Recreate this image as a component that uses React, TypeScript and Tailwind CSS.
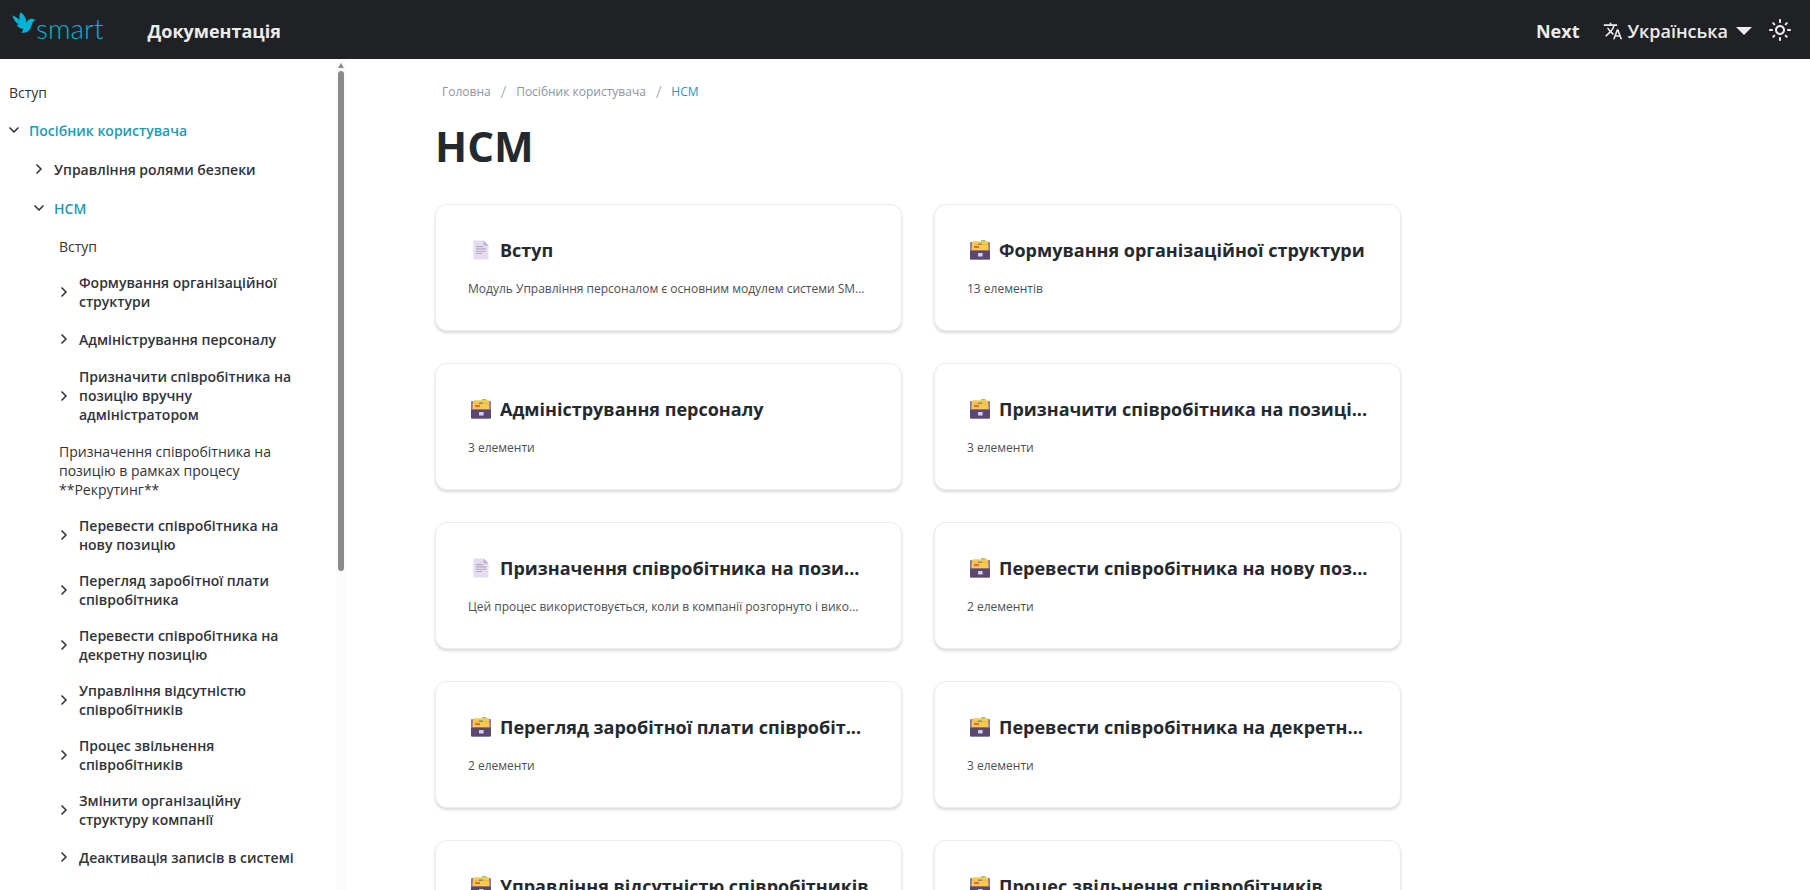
import { useState } from 'react'
import { ChevronDown, ChevronRight } from 'lucide-react'
import { MdTranslate } from 'react-icons/md'

type Level = 0 | 1 | 2

interface NavItem {
  label: string
  level: Level
  category?: boolean
  open?: boolean
}

interface Card {
  title: string
  text: string
  icon: 'page' | 'box'
}

const navItems: NavItem[] = [
  { label: 'Вступ', level: 0 },
  { label: 'Посібник користувача', level: 0, category: true, open: true },
  { label: 'Управління ролями безпеки', level: 1, category: true },
  { label: 'HCM', level: 1, category: true, open: true },
  { label: 'Вступ', level: 2 },
  { label: 'Формування організаційної структури', level: 2, category: true },
  { label: 'Адміністрування персоналу', level: 2, category: true },
  { label: 'Призначити співробітника на позицію вручну адміністратором', level: 2, category: true },
  { label: 'Призначення співробітника на позицію в рамках процесу **Рекрутинг**', level: 2 },
  { label: 'Перевести співробітника на нову позицію', level: 2, category: true },
  { label: 'Перегляд заробітної плати співробітника', level: 2, category: true },
  { label: 'Перевести співробітника на декретну позицію', level: 2, category: true },
  { label: 'Управління відсутністю співробітників', level: 2, category: true },
  { label: 'Процес звільнення співробітників', level: 2, category: true },
  { label: 'Змінити організаційну структуру компанії', level: 2, category: true },
  { label: 'Деактивація записів в системі', level: 2, category: true },
]

const cards: Card[] = [
  { title: 'Вступ', text: 'Модуль Управління персоналом є основним модулем системи SM...', icon: 'page' },
  { title: 'Формування організаційної структури', text: '13 елементів', icon: 'box' },
  { title: 'Адміністрування персоналу', text: '3 елементи', icon: 'box' },
  { title: 'Призначити співробітника на позиці...', text: '3 елементи', icon: 'box' },
  { title: 'Призначення співробітника на пози...', text: 'Цей процес використовується, коли в компанії розгорнуто і вико...', icon: 'page' },
  { title: 'Перевести співробітника на нову поз...', text: '2 елементи', icon: 'box' },
  { title: 'Перегляд заробітної плати співробіт...', text: '2 елементи', icon: 'box' },
  { title: 'Перевести співробітника на декретн...', text: '3 елементи', icon: 'box' },
  { title: 'Управління відсутністю співробітників', text: '2 елементи', icon: 'box' },
  { title: 'Процес звільнення співробітників', text: '2 елементи', icon: 'box' },
]

const indent: Record<Level, string> = {
  0: 'pl-[9px]',
  1: 'pl-[34px]',
  2: 'pl-[59px]',
}

function BirdIcon() {
  return (
    <svg viewBox="0 0 24 24" className="h-6 w-6 shrink-0 fill-[#00b4d8]" aria-hidden="true">
      <path d="M0.5 3.2 C3 4.6 5.5 5.8 7.8 8 C7 5 7.2 2.6 8.6 0.2 C10.8 1.8 13.2 4.2 14 7.8 L14.4 11 C15.2 8.6 17 7 19.2 6.8 C20.6 6.7 21.4 7.2 22 7.6 L24 8.1 L21.7 8.9 C20.4 10 20 12 19.2 14.4 C17.8 18.8 14.4 21.2 9.2 20.8 C10.6 19.4 11.2 18.2 11.2 16.8 C8 16.6 5.6 15.2 4.6 12.8 C5.4 12.8 6 12.6 6.6 12.2 C3.6 10.6 1.2 7.6 0.5 3.2 Z" />
    </svg>
  )
}

function SunIcon() {
  return (
    <svg viewBox="0 0 24 24" className="h-6 w-6" aria-hidden="true">
      <path
        fill="currentColor"
        d="M12,9c1.65,0,3,1.35,3,3s-1.35,3-3,3s-3-1.35-3-3S10.35,9,12,9 M12,7c-2.76,0-5,2.24-5,5s2.24,5,5,5s5-2.24,5-5 S14.76,7,12,7L12,7z M2,13l2,0c0.55,0,1-0.45,1-1s-0.45-1-1-1l-2,0c-0.55,0-1,0.45-1,1S1.45,13,2,13z M20,13l2,0c0.55,0,1-0.45,1-1 s-0.45-1-1-1l-2,0c-0.55,0-1,0.45-1,1S19.45,13,20,13z M11,2v2c0,0.55,0.45,1,1,1s1-0.45,1-1V2c0-0.55-0.45-1-1-1S11,1.45,11,2z M11,20v2c0,0.55,0.45,1,1,1s1-0.45,1-1v-2c0-0.55-0.45-1-1-1C11.45,19,11,19.45,11,20z M5.99,4.58c-0.39-0.39-1.03-0.39-1.41,0 c-0.39,0.39-0.39,1.03,0,1.41l1.06,1.06c0.39,0.39,1.03,0.39,1.41,0s0.39-1.03,0-1.41L5.99,4.58z M18.36,16.95 c-0.39-0.39-1.03-0.39-1.41,0c-0.39,0.39-0.39,1.03,0,1.41l1.06,1.06c0.39,0.39,1.03,0.39,1.41,0c0.39-0.39,0.39-1.03,0-1.41 L18.36,16.95z M19.42,5.99c0.39-0.39,0.39-1.03,0-1.41c-0.39-0.39-1.03-0.39-1.41,0l-1.06,1.06c-0.39,0.39-0.39,1.03,0,1.41 s1.03,0.39,1.41,0L19.42,5.99z M7.05,18.36c0.39-0.39,0.39-1.03,0-1.41c-0.39-0.39-1.03-0.39-1.41,0l-1.06,1.06 c-0.39,0.39-0.39,1.03,0,1.41s1.03,0.39,1.41,0L7.05,18.36z"
      />
    </svg>
  )
}

function PageIcon() {
  return (
    <svg viewBox="-1 0 24 24" className="h-6 w-6 shrink-0" aria-hidden="true">
      <path d="M4.5 2.5 H14.5 L19.5 7.5 V21.5 H4.5 Z" fill="#e6dcef" />
      <path d="M14.5 2.5 L19.5 7.5 H14.5 Z" fill="#bcb0cd" />
      <path d="M7 8.6 H14 M7 10.9 H17 M7 13.2 H17 M7 15.5 H13" stroke="#b5aac3" strokeWidth="1.1" />
    </svg>
  )
}

function BoxIcon() {
  return (
    <svg viewBox="-1 0 24 24" className="h-6 w-6 shrink-0" aria-hidden="true">
      <rect x="2" y="4" width="20" height="17.5" rx="1" fill="#8d7a9c" />
      <path d="M13 2 H17.5 V4 H13 Z" fill="#86c98a" />
      <path d="M4 4.4 L5 3.2 H20 L20.5 12.5 H3.5 Z" fill="#fcc94f" />
      <path d="M5 6.6 H20" stroke="#f4b23c" strokeWidth="0.8" />
      <path d="M10 5.4 H14 V7 H10 Z" fill="#7c9a6b" />
      <path d="M6 8 H11 V10 H6 Z" fill="#f0653f" />
      <rect x="2" y="12.5" width="20" height="9" rx="1" fill="#5b4870" />
      <rect x="10" y="15" width="4.6" height="3.6" rx="0.5" fill="#d9ccf0" />
    </svg>
  )
}

function Header() {
  return (
    <header className="flex h-[59px] shrink-0 items-center justify-between bg-[#202125] pr-[18px] pl-3 text-[#ececec]">
      <div className="flex items-center gap-11">
        <a href="/" className="flex items-start pb-1 text-[#00b4d8]">
          <BirdIcon />
          <span className="font-['Lato',sans-serif] text-[28px] leading-8 font-light">smart</span>
        </a>
        <a href="/docs" className="pt-[2px] text-lg font-bold">Документація</a>
      </div>

      <nav className="flex items-center gap-6">
        <a href="/next" className="pt-[2px] text-lg font-bold">Next</a>
        <button type="button" className="flex items-center gap-1 pt-[2px] text-lg font-semibold">
          <MdTranslate className="size-5" />
          Українська
          <svg viewBox="0 0 16 8" className="ml-1 h-2 w-4" aria-hidden="true">
            <path d="M0 0 H16 L8 8 Z" fill="currentColor" />
          </svg>
        </button>
        <button type="button" aria-label="Тема" className="-ml-2">
          <SunIcon />
        </button>
      </nav>
    </header>
  )
}

function NavEntry({ item }: { item: NavItem }) {
  const [open, setOpen] = useState(Boolean(item.open))

  if (!item.category) {
    return (
      <li className={`${indent[item.level]} py-[9px] pr-8`}>
        <a href="#" className="block">{item.label}</a>
      </li>
    )
  }

  const Chevron = open ? ChevronDown : ChevronRight
  return (
    <li className={indent[item.level]}>
      <button
        type="button"
        aria-expanded={open}
        onClick={() => setOpen(!open)}
        className="flex min-h-[39px] w-full items-center gap-[7px] pt-2 pb-[9px] pr-6 text-left font-semibold"
      >
        <Chevron className="-ml-[3px] size-4 shrink-0" strokeWidth={2.5} />
        <span className={item.open ? 'text-[#1d9ab5]' : ''}>{item.label}</span>
      </button>
    </li>
  )
}

function Sidebar() {
  return (
    <aside className="flex w-[346px] shrink-0">
      <nav className="flex-1 overflow-hidden pt-[15px] text-sm leading-[19px] text-[#303338]">
        <ul>
          {navItems.map((item, i) => (
            <NavEntry key={i} item={item} />
          ))}
        </ul>
      </nav>
      <div className="flex w-[10px] flex-col items-center gap-[3px] bg-[#fcfcfc] pt-1">
        <svg viewBox="0 0 6 5" className="h-[5px] w-[6px]" aria-hidden="true">
          <path d="M3 0 L6 5 H0 Z" fill="#8b8b8b" />
        </svg>
        <div className="h-[calc(60%+4px)] w-[6px] rounded-full bg-[#8b8b8b]" />
      </div>
    </aside>
  )
}

function DocCard({ card }: { card: Card }) {
  return (
    <a
      href="#"
      className="flex min-w-0 flex-col gap-4 rounded-xl border border-[#ebedf0] bg-white px-8 pt-[31px] pb-[33px] shadow-[0_2px_3px_rgba(0,0,0,0.15)]"
    >
      <h2 className="flex items-center gap-2 text-lg leading-7 font-bold text-[#24292e]">
        {card.icon === 'page' ? <PageIcon /> : <BoxIcon />}
        <span className="truncate">{card.title}</span>
      </h2>
      <p className="truncate text-xs leading-[17px] text-[#4b4f54]">{card.text}</p>
    </a>
  )
}

export default function App() {
  return (
    <div className="flex h-screen flex-col bg-white font-['Open_Sans','Noto_Sans',sans-serif]">
      <Header />
      <div className="flex min-h-0 flex-1">
        <Sidebar />
        <main className="flex-1 overflow-y-auto pt-[23px] pr-8 pl-[89px] [scrollbar-width:none]">
          <div className="max-w-[966px]">
            <nav aria-label="Навігація" className="flex items-center gap-[10px] px-[7px] text-xs leading-5 text-[#8d949e]">
              <a href="#">Головна</a>
              <span className="text-base leading-5 font-light">/</span>
              <a href="#">Посібник користувача</a>
              <span className="text-base leading-5 font-light">/</span>
              <span className="text-[#1d9ab5]">HCM</span>
            </nav>
            <h1 className="mt-[19px] mb-[33px] text-[42px] leading-[50px] font-bold text-[#24292e]">HCM</h1>
            <section className="grid grid-cols-2 gap-8">
              {cards.map((card) => (
                <DocCard key={card.title} card={card} />
              ))}
            </section>
          </div>
        </main>
      </div>
    </div>
  )
}
